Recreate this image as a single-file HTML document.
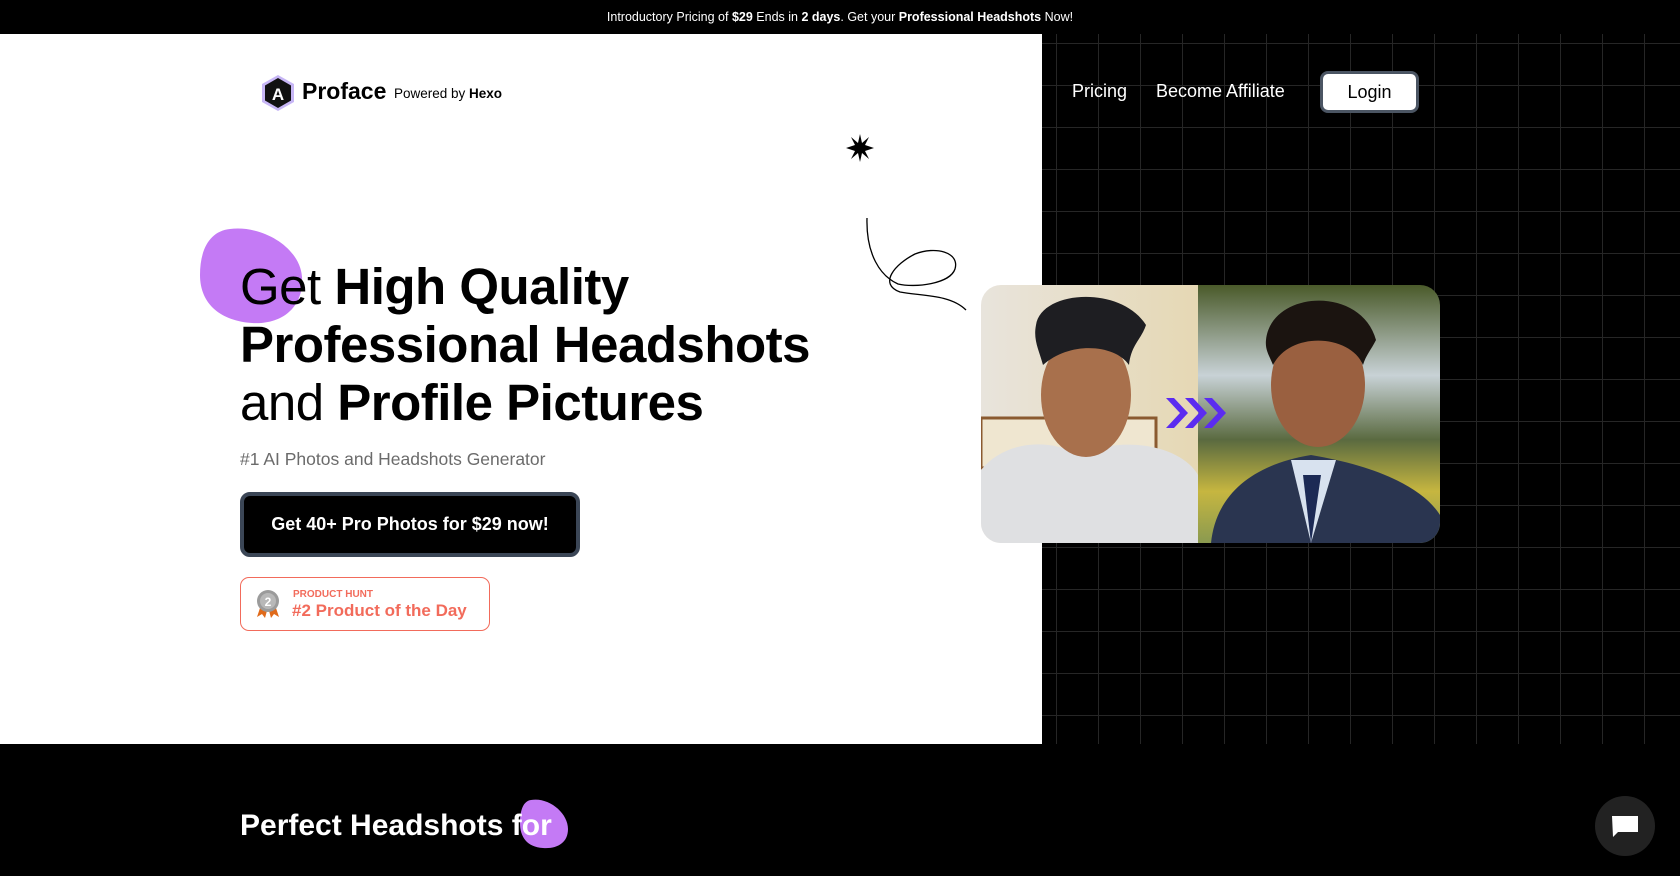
<!DOCTYPE html>
<html><head><meta charset="utf-8"><style>
*{margin:0;padding:0;box-sizing:border-box}
body{width:1680px;height:876px;overflow:hidden;background:#000;font-family:"Liberation Sans",sans-serif;position:relative}
.top{position:absolute;left:0;top:0;width:1680px;height:34px;background:#000;color:#fff;font-size:12.5px;text-align:center;line-height:34px}
.white{position:absolute;left:0;top:34px;width:1042px;height:710px;background:#fff}
.grid{position:absolute;left:1042px;top:34px;width:638px;height:710px;background-color:#000;
background-image:linear-gradient(to right,#262626 1px,transparent 1px),linear-gradient(to bottom,#262626 1px,transparent 1px);
background-size:42px 42px;background-position:14px 9px}
.abs{position:absolute}
h1{position:absolute;left:240px;top:258px;font-size:51px;line-height:58px;color:#000;font-weight:400;letter-spacing:-0.5px}
h1 b{font-weight:700}
</style></head><body>
<div class="top">Introductory Pricing of <b>$29</b> Ends in <b>2 days</b>. Get your <b>Professional Headshots</b> Now!</div>
<div class="white"></div>
<div class="grid"></div>
<svg class="abs" style="left:260px;top:74px" width="36" height="38" viewBox="0 0 36 38"><polygon points="18,1 34,10 34,28 18,37 2,28 2,10" fill="#c7b6f5"/><polygon points="18,4 31,11.5 31,26.5 18,34 5,26.5 5,11.5" fill="#111"/><text x="18" y="26" font-size="17" fill="#fff" text-anchor="middle" font-family="Liberation Sans" font-weight="700">A</text></svg>
<div class="abs" style="left:302px;top:78px;font-size:23px;font-weight:700;color:#000">Proface</div>
<div class="abs" style="left:394px;top:86px;font-size:13.5px;color:#000">Powered by <b>Hexo</b></div>
<div class="abs" style="left:1072px;top:81px;font-size:18px;color:#fff">Pricing</div>
<div class="abs" style="left:1156px;top:81px;font-size:18px;color:#fff">Become Affiliate</div>
<div class="abs" style="left:1320px;top:71px;width:99px;height:42px;border:3px solid #4b5563;border-radius:8px;background:#fff;color:#000;font-size:18px;text-align:center;line-height:36px">Login</div>
<svg class="abs" style="left:846px;top:134px" width="28" height="28" viewBox="-14 -14 28 28"><polygon fill="#000" points="0,-14 2,-5 9,-11 5,-3 14,0 5,3 9,11 2,5 0,14 -2,5 -9,11 -5,3 -14,0 -5,-3 -9,-11 -2,-5"/></svg>
<svg class="abs" style="left:860px;top:214px" width="110" height="100" viewBox="0 0 110 100"><path d="M7,4 C6,40 20,62 38,70 C55,74 90,70 95,55 C100,38 75,32 55,40 C35,50 18,70 40,78 C60,82 90,80 106,96" fill="none" stroke="#000" stroke-width="1.3"/></svg>
<svg class="abs" style="left:200px;top:227px" width="104" height="98" viewBox="0 0 104 98"><path d="M30,2 C62,-2 100,20 102,50 C104,82 80,98 52,96 C22,94 0,78 0,48 C0,22 10,4 30,2Z" fill="#c47af5"/></svg>
<h1>Get <b>High Quality</b><br><b>Professional Headshots</b><br>and <b>Profile Pictures</b></h1>
<div class="abs" style="left:240px;top:449px;font-size:17.5px;color:#6b6b6b">#1 AI Photos and Headshots Generator</div>
<div class="abs" style="left:240px;top:492px;width:340px;height:65px;background:#000;border:4px solid #3b4656;border-radius:10px;color:#fff;font-size:18px;font-weight:700;text-align:center;line-height:57px">Get 40+ Pro Photos for $29 now!</div>
<div class="abs" style="left:240px;top:577px;width:250px;height:54px;border:1px solid #f26b5b;border-radius:9px;background:#fff"></div>
<svg class="abs" style="left:255px;top:589px" width="26" height="30" viewBox="0 0 26 30"><path d="M6,16 L2,28 L7,25 L10,29 L13,18Z M20,16 L24,28 L19,25 L16,29 L13,18Z" fill="#e06a1a"/><circle cx="13" cy="12" r="11" fill="#9b9b9b"/><circle cx="13" cy="12" r="8" fill="#b8b8b8"/><text x="13" y="17" font-size="12" fill="#fff" text-anchor="middle" font-weight="700" font-family="Liberation Sans">2</text></svg>
<div class="abs" style="left:293px;top:589px;font-size:10px;font-weight:700;color:#f26b5b">PRODUCT HUNT</div>
<div class="abs" style="left:292px;top:601px;font-size:17px;font-weight:700;color:#f26b5b">#2 Product of the Day</div>
<svg class="abs" style="left:981px;top:285px" width="459" height="258" viewBox="0 0 459 258">
<defs><clipPath id="c"><rect width="459" height="258" rx="20"/></clipPath>
<linearGradient id="bg1" x1="0" y1="0" x2="1" y2="0"><stop offset="0" stop-color="#e8e4dc"/><stop offset="1" stop-color="#e6d8b4"/></linearGradient>
<linearGradient id="bg2" x1="0" y1="0" x2="0" y2="1"><stop offset="0" stop-color="#4a5a2a"/><stop offset="0.35" stop-color="#c8d2d6"/><stop offset="0.6" stop-color="#5a6a40"/><stop offset="0.8" stop-color="#c6b640"/><stop offset="1" stop-color="#8a9a50"/></linearGradient></defs>
<g clip-path="url(#c)">
<rect width="217" height="258" fill="url(#bg1)"/>
<rect x="0" y="133" width="175" height="50" fill="#efe6d0" stroke="#8a5a30" stroke-width="3"/>
<path d="M0,185 C20,160 60,150 100,170 C140,150 200,160 217,190 L217,258 L0,258Z" fill="#dfe0e2"/>
<ellipse cx="105" cy="110" rx="45" ry="62" fill="#a8704c"/>
<path d="M55,40 C60,5 140,0 165,40 C160,55 150,60 148,80 C135,60 90,55 62,80 C58,65 52,55 55,40Z" fill="#1e1e22"/>
<rect x="217" width="242" height="258" fill="url(#bg2)"/>
<path d="M230,258 C235,210 270,180 330,170 C390,180 440,200 459,230 L459,258Z" fill="#2a3550"/>
<path d="M310,175 L330,258 L355,175Z" fill="#d8e2ef"/>
<path d="M322,190 L330,258 L340,190Z" fill="#1c2a55"/>
<ellipse cx="337" cy="100" rx="47" ry="62" fill="#9a6040"/>
<path d="M285,55 C290,5 380,0 395,55 C390,65 385,70 382,80 C370,50 310,45 292,80 C288,70 284,65 285,55Z" fill="#1b1410"/>
<path d="M185,113 L199,128 L185,143 L193,143 L207,128 L193,113Z M204,113 L218,128 L204,143 L212,143 L226,128 L212,113Z M223,113 L237,128 L223,143 L231,143 L245,128 L231,113Z" fill="#5b2cf0"/>
</g></svg>
<svg class="abs" style="left:519px;top:799px" width="50" height="50" viewBox="0 0 50 50"><path d="M12,1 C30,-2 49,14 49,30 C49,44 38,50 24,49 C8,48 1,38 1,24 C1,12 4,2 12,1Z" fill="#c47af5"/></svg>
<div class="abs" style="left:240px;top:809px;font-size:30px;font-weight:700;color:#fff">Perfect Headshots for</div>
<div class="abs" style="left:1595px;top:796px;width:60px;height:60px;border-radius:50%;background:#222"></div>
<svg class="abs" style="left:1610px;top:812px" width="30" height="28" viewBox="0 0 30 28"><path d="M2,4 L28,4 L28,20 L8,20 L3,25Z" fill="#fff"/></svg>
</body></html>
